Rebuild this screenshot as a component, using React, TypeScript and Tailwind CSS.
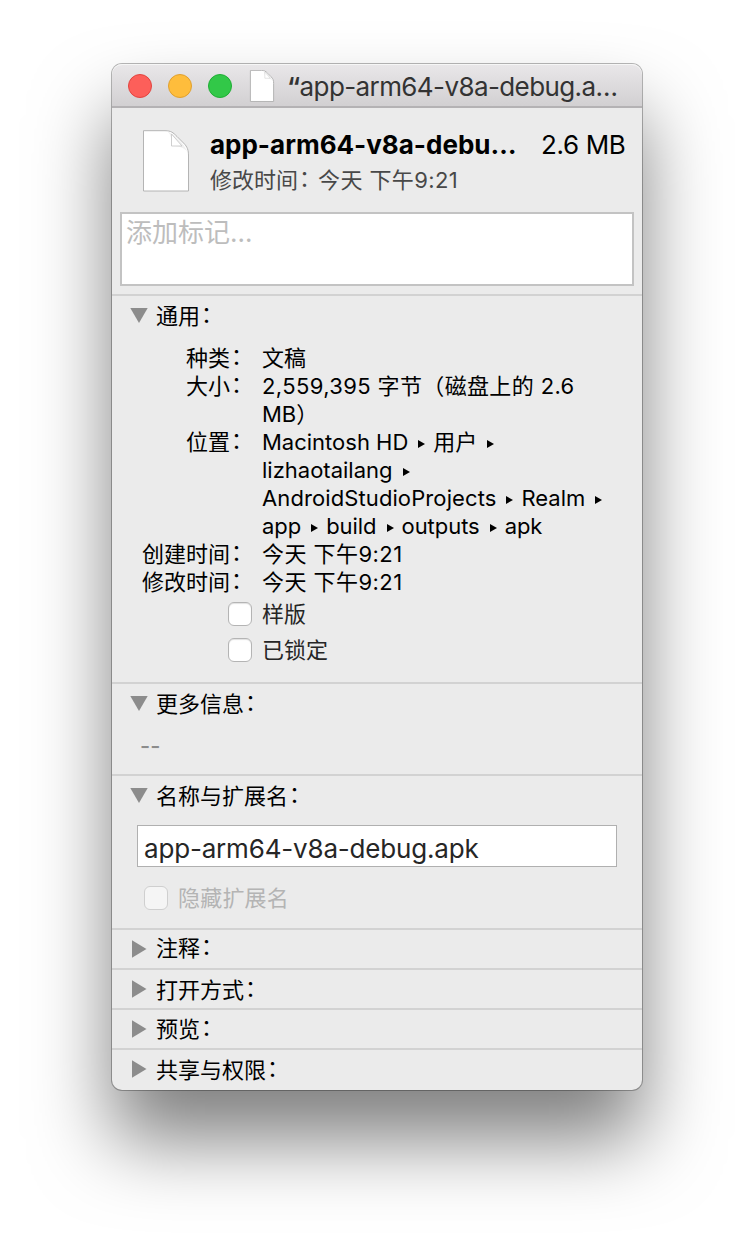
import type { ReactNode } from "react";

const font = "font-['Inter','Noto_Sans_CJK_SC',sans-serif]";

function Page({ className }: { className: string }) {
  return (
    <svg className={className} viewBox="0 0 48 62" fill="none" stroke="#b4b4b4">
      <path d="M1.500 .7H23C29 .7 31 2.500 35 6.500L41.500 13C45.500 17 46.500 20 46.500 26V61H1.500Z" fill="#fff" vectorEffect="non-scaling-stroke" />
      <path d="M25 1.500C29 3.500 29.500 9 29.500 16C36 16 42 17 45.500 22C43 15 32 3 25 1.500Z" fill="#f0f0f0" stroke="none" />
      <path d="M29.500 4V16H40Z" fill="#fff" stroke="#c4c4c4" strokeWidth=".8" />
    </svg>
  );
}

function Disclosure({ open }: { open?: boolean }) {
  return (
    <svg className="h-[18px] w-[18px] shrink-0" viewBox="0 0 18 18" fill="#8c8c8c">
      {open ? <path d="M.3 2H17.700L9 17Z" /> : <path d="M2 .3V17.700L16.500 9Z" />}
    </svg>
  );
}

function Colon() {
  return <span className="ml-px inline-block -translate-y-[2px] tracking-[-3px]">：</span>;
}

function Section({ title, head, open, className, children }: { title: string; head: string; open?: boolean; className: string; children?: ReactNode }) {
  return (
    <section className={`border-t-2 border-[#d2d2d2] ${className}`}>
      <h2 className="flex h-[38px] gap-2 pl-[18px]">
        <span className="flex h-[37px] items-center">
          <Disclosure open={open} />
        </span>
        <span className={head}>{title}<Colon /></span>
      </h2>
      {children}
    </section>
  );
}

function Row({ label, lines }: { label: string; lines: ReactNode[] }) {
  return (
    <div className="flex">
      <dt className="w-[138px] text-right whitespace-nowrap">{label}<Colon /></dt>
      <dd className="ml-3">
        {lines.map((l, i) => (
          <div key={i} className="h-7 whitespace-nowrap">{l}</div>
        ))}
      </dd>
    </div>
  );
}

function Sep() {
  return (
    <svg className="mr-2 ml-[10px] inline-block h-[8px] w-[7px] align-[2px]" viewBox="0 0 7 8">
      <path d="M0 0V8L7 4Z" />
    </svg>
  );
}

function Check({ label, disabled }: { label: string; disabled?: boolean }) {
  return (
    <label className={`flex h-6 items-center gap-[10px] ${disabled ? "tracking-[0.2px] text-[#b4b4b4]" : "text-[#262626]"}`}>
      <span className={`h-6 w-6 rounded-[6px] border ${disabled ? "border-[#cfcfcf] bg-[#f5f5f5]" : "border-[#b4b4b4] bg-white shadow-[inset_0_1px_1px_rgba(0,0,0,0.12)]"}`} />
      {label}
    </label>
  );
}

export default function App() {
  return (
    <main className={`${font} h-[1250px] w-[754px] overflow-hidden bg-white pt-16 pl-28 text-[22px] leading-7 text-black`} lang="zh-CN">
      <div className="h-[1026px] w-[530px] rounded-[10px] bg-[#ebebeb] shadow-[0_0_0_1px_rgba(0,0,0,0.28),0_50px_78px_rgba(0,0,0,0.5)]">
        <header className="flex h-11 items-center rounded-t-[10px] border-b-2 border-[#b4b2b4] bg-linear-to-b from-[#e9e7e9] to-[#d2d0d2] pt-[2px] pl-4 shadow-[inset_0_1px_0_#f6f6f6]">
          <span className="h-6 w-6 rounded-full border border-[#e2443f] bg-[#fd5f5a]" />
          <span className="ml-4 h-6 w-6 rounded-full border border-[#e0a02f] bg-[#febd3c]" />
          <span className="ml-4 h-6 w-6 rounded-full border border-[#1fae35] bg-[#32c848]" />
          <Page className="ml-[17px] h-8 w-[26px]" />
          <span className="ml-3 pt-[2px] text-[26px] tracking-[-0.6px] whitespace-nowrap text-[#333]"><span className="font-semibold">“</span>app-arm64-v8a-debug.a…</span>
        </header>
        <div className="flex h-[104px] pt-[22px] pl-[30px]">
          <Page className="h-[62px] w-12" />
          <div className="ml-5 w-[308px]">
            <div className="-mt-px h-8 text-[26px] leading-8 font-bold whitespace-nowrap">app-arm64-v8a-debu…</div>
            <div className="mt-[5px] text-[#484848]">修改时间<Colon /><span className="tracking-[0.4px]">今天 下午9:21</span></div>
          </div>
          <div className="-mt-px ml-[23px] text-[26px] leading-8 tracking-[-0.35px] whitespace-nowrap">2.6 MB</div>
        </div>
        <div className="mx-2 mb-2 h-[74px] border-2 border-[#c3c3c3] bg-white pt-[5px] pl-1 text-[26px] text-[#bdbdbd]">添加标记…</div>
        <Section title="通用" head="pt-[6px]" open className="h-[388px]">
          <dl className="mt-[10px]">
            <Row label="种类" lines={["文稿"]} />
            <Row label="大小" lines={[<span className="tracking-[0.37px]">2,559,395 字节（磁盘上的 2.6</span>, "MB）"]} />
            <Row
              label="位置"
              lines={[
                <>Macintosh HD<Sep />用户<Sep /></>,
                <>lizhaotailang<Sep /></>,
                <><span className="tracking-[0.1px]">AndroidStudioProjects</span><Sep />Realm<Sep /></>,
                <span className="tracking-[-0.05px]">app<Sep />build<Sep />outputs<Sep />apk</span>,
              ]}
            />
            <Row label="创建时间" lines={[<span className="tracking-[0.45px]">今天 下午9:21</span>]} />
            <Row label="修改时间" lines={[<span className="tracking-[0.45px]">今天 下午9:21</span>]} />
          </dl>
          <div className="mt-[6px] ml-[116px] flex flex-col gap-3">
            <Check label="样版" />
            <Check label="已锁定" />
          </div>
        </Section>
        <Section title="更多信息" head="pt-[6px]" open className="h-[92px]">
          <div className="mt-[10px] ml-[28px] h-7 font-medium text-[#8c8c8c]">--</div>
        </Section>
        <Section title="名称与扩展名" head="pt-[6px]" open className="h-[154px]">
          <div className="mt-[11px] ml-[25px] h-[42px] w-[480px] border border-[#b0b0b0] bg-white pl-[6px] text-[26px] leading-[46px] tracking-[-0.18px] text-[#262626]">app-arm64-v8a-debug.apk</div>
          <div className="mt-[19px] ml-8">
            <Check label="隐藏扩展名" disabled />
          </div>
        </Section>
        <Section title="注释" head="pt-1" className="h-10" />
        <Section title="打开方式" head="pt-[6px]" className="h-10" />
        <Section title="预览" head="pt-[5px]" className="h-10" />
        <Section title="共享与权限" head="pt-[6px]" className="h-[42px]" />
      </div>
    </main>
  );
}
